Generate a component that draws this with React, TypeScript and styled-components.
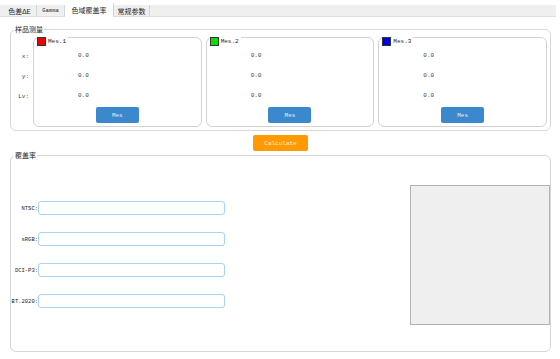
import React from "react";
import styled, { createGlobalStyle } from "styled-components";

const GlobalStyle = createGlobalStyle`
  html, body { margin: 0; padding: 0; background: #fff; }
  body {
    font-family: "Liberation Mono", "Noto Sans CJK SC", monospace;
    font-size: 6px;
    color: #1e1e1e;
  }
`;

const Page = styled.div`
  width: 560px;
  height: 359px;
  overflow: hidden;
  background: #fff;
`;

const TabBar = styled.div`
  display: flex;
  align-items: flex-end;
  box-sizing: border-box;
  width: 556px;
  height: 12px;
  margin-top: 5px;
  padding-left: 3px;
  background: #efefef;
  border-bottom: 1px solid #dedede;
`;

const Tab = styled.div<{ w: number; active?: boolean; latin?: boolean }>`
  display: flex;
  align-items: center;
  justify-content: center;
  box-sizing: border-box;
  width: ${({ w }) => w}px;
  height: ${({ active }) => (active ? 14 : 11)}px;
  margin-bottom: ${({ active }) => (active ? -1 : 0)}px;
  background: ${({ active }) => (active ? "#fff" : "#efefef")};
  border-right: 1px solid #d4d4d4;
  font-size: ${({ latin }) => (latin ? 5.5 : 7)}px;
  white-space: nowrap;
`;

const Body = styled.div`
  display: flex;
  flex-direction: column;
  padding: 12px 9px 0 10px;
`;

const Group = styled.div<{ h: number }>`
  display: flex;
  flex-direction: column;
  box-sizing: border-box;
  height: ${({ h }) => h}px;
  border: 1px solid #d6d6d6;
  border-radius: 6px;
`;

const GroupTitle = styled.div`
  align-self: flex-start;
  height: 9px;
  margin: -4px 0 0 3px;
  padding: 0 1px;
  background: #fff;
  font-size: 7px;
  line-height: 9px;
`;

const MeasureGrid = styled.div`
  display: grid;
  grid-template-columns: 18px repeat(3, 1fr);
  gap: 4px;
  margin-top: 2px;
  padding-right: 3px;
`;

const LabelCol = styled.div`
  display: flex;
  flex-direction: column;
  padding-top: 9px;
`;

const Row = styled.div<{ indent?: number; right?: boolean }>`
  display: flex;
  align-items: center;
  justify-content: ${({ right }) => (right ? "flex-end" : "flex-start")};
  height: 20px;
  padding-left: ${({ indent }) => indent ?? 0}px;
  color: #3a3a3a;
`;

const MesBox = styled.div`
  display: flex;
  flex-direction: column;
  box-sizing: border-box;
  height: 90px;
  border: 1px solid #d2d2d2;
  border-radius: 6px;
`;

const MesTitle = styled.div`
  display: flex;
  align-items: center;
  gap: 2px;
  align-self: flex-start;
  height: 9px;
  margin: -1px 0 0 3px;
  padding-right: 2px;
  background: #fff;
`;

const Swatch = styled.span<{ color: string }>`
  box-sizing: border-box;
  width: 9px;
  height: 9px;
  background: ${({ color }) => color};
  border: 1px solid #333;
`;

const Values = styled.div`
  display: flex;
  flex-direction: column;
  margin-top: -1px;
`;

const MesButton = styled.button`
  align-self: center;
  width: 43px;
  height: 16px;
  margin-top: 2px;
  padding: 0;
  border: none;
  border-radius: 2px;
  background: #3b88cd;
  color: #e6eef8;
  font-family: inherit;
  font-size: 6px;
`;

const CalcRow = styled.div`
  display: flex;
  justify-content: center;
  margin: 4px 0;
`;

const CalcButton = styled.button`
  width: 55px;
  height: 16px;
  padding: 0;
  border: none;
  border-radius: 2px;
  background: #ff9a05;
  color: #fff3d6;
  font-family: inherit;
  font-size: 6px;
`;

const CoverBody = styled.div`
  display: flex;
  justify-content: space-between;
  align-items: flex-start;
`;

const Fields = styled.div`
  display: flex;
  flex-direction: column;
  gap: 17px;
  margin-top: 40px;
`;

const Field = styled.div`
  display: flex;
  align-items: center;
`;

const FieldLabel = styled.label`
  display: flex;
  justify-content: flex-end;
  width: 27px;
  white-space: nowrap;
  font-size: 5.5px;
`;

const Input = styled.input`
  box-sizing: border-box;
  width: 187px;
  height: 14px;
  margin: 0;
  border: 1px solid #a9d3f5;
  border-radius: 3px;
  background: #fff;
  outline: none;
`;

const Preview = styled.div`
  box-sizing: border-box;
  width: 140px;
  height: 140px;
  margin-top: 24px;
  background: #efefef;
  border: 1px solid #b3b3b3;
`;

const tabs = [
  { label: "色差ΔE", w: 34 },
  { label: "Gamma", w: 28, latin: true },
  { label: "色域覆盖率", w: 49, active: true },
  { label: "常规参数", w: 36 },
];

const measures = [
  { name: "Mes.1", color: "#ee0000" },
  { name: "Mes.2", color: "#00e000" },
  { name: "Mes.3", color: "#0000e6" },
];

const gamuts = ["NTSC:", "sRGB:", "DCI-P3:", "BT.2020:"];

export default function App() {
  return (
    <Page>
      <GlobalStyle />
      <TabBar>
        {tabs.map((t) => (
          <Tab key={t.label} w={t.w} active={t.active} latin={t.latin}>
            {t.label}
          </Tab>
        ))}
      </TabBar>
      <Body>
        <Group h={102}>
          <GroupTitle>样品测量</GroupTitle>
          <MeasureGrid>
            <LabelCol>
              <Row right>x:</Row>
              <Row right>y:</Row>
              <Row right>Lv:</Row>
            </LabelCol>
            {measures.map((m) => (
              <MesBox key={m.name}>
                <MesTitle>
                  <Swatch color={m.color} />
                  {m.name}
                </MesTitle>
                <Values>
                  <Row indent={44}>0.0</Row>
                  <Row indent={44}>0.0</Row>
                  <Row indent={44}>0.0</Row>
                </Values>
                <MesButton>Mes</MesButton>
              </MesBox>
            ))}
          </MeasureGrid>
        </Group>
        <CalcRow>
          <CalcButton>Calculate</CalcButton>
        </CalcRow>
        <Group h={197}>
          <GroupTitle>覆盖率</GroupTitle>
          <CoverBody>
            <Fields>
              {gamuts.map((g) => (
                <Field key={g}>
                  <FieldLabel>{g}</FieldLabel>
                  <Input />
                </Field>
              ))}
            </Fields>
            <Preview />
          </CoverBody>
        </Group>
      </Body>
    </Page>
  );
}
